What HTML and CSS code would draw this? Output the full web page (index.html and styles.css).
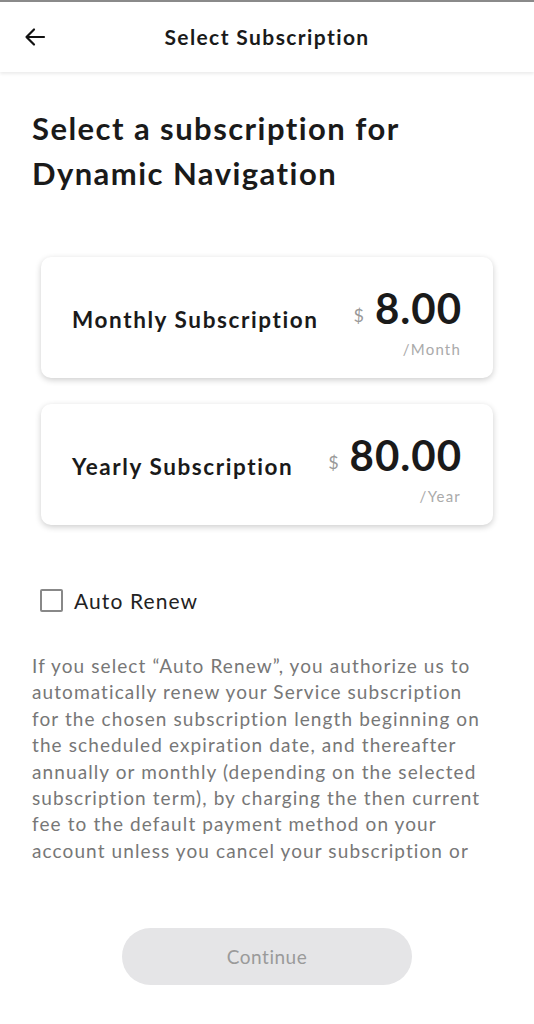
FILE: index.html
```html
<!DOCTYPE html>
<html>

<head>
	<link rel="stylesheet" href="styles.css">
</head>

<body>
	<div class="header">
		<svg class="back" width="24" height="24" viewBox="0 0 24 24">
			<path d="M21 12H3.5M11 4.5L3.5 12L11 19.5" fill="none" stroke="#111" stroke-width="2.2" stroke-linecap="round" stroke-linejoin="round"/>
		</svg>
		<div class="title">Select Subscription</div>
	</div>

	<div class="content">
		<h1>Select a subscription for<br>Dynamic Navigation</h1>

		<div class="plans">
			<div class="card">
				<div class="card-name">Monthly Subscription</div>
				<div class="price">
					<div class="amount"><span class="dollar">$</span>8.00</div>
					<div class="period">/Month</div>
				</div>
			</div>
			<div class="card">
				<div class="card-name">Yearly Subscription</div>
				<div class="price">
					<div class="amount"><span class="dollar">$</span>80.00</div>
					<div class="period">/Year</div>
				</div>
			</div>
		</div>

		<label class="renew">
			<span class="box"></span>
			Auto Renew
		</label>

		<p class="terms">If you select “Auto Renew”, you authorize us to<br>automatically renew your Service subscription<br>for the chosen subscription length beginning on<br>the scheduled expiration date, and thereafter<br>annually or monthly (depending on the selected<br>subscription term), by charging the then current<br>fee to the default payment method on your<br>account unless you cancel your subscription or</p>

		<div class="actions">
			<button class="continue">Continue</button>
		</div>
	</div>
</body>

</html>
```

FILE: styles.css
```css
body {
	margin: 0;
	padding: 0;
	background: #fff;
	font-family: Lato, "Open Sans", sans-serif;
	color: #1a1a1a;
}

.header {
	height: 72px;
	border-top: 2px solid #8a8a8a;
	box-sizing: border-box;
	display: flex;
	align-items: center;
	justify-content: center;
	position: relative;
	box-shadow: 0 2px 3px rgba(0, 0, 0, 0.08);
}

.back {
	position: absolute;
	left: 23px;
	top: 23px;
}

.title {
	font-size: 21px;
	font-weight: 700;
	letter-spacing: 1.4px;
	margin-top: -2px;
}

.content {
	padding: 0 32px;
}

h1 {
	margin: 34px 0 0;
	font-size: 31px;
	line-height: 45px;
	font-weight: 700;
	letter-spacing: 1.45px;
	white-space: nowrap;
}

.plans {
	margin: 61px 9px 0;
	display: flex;
	flex-direction: column;
	gap: 26px;
}

.card {
	height: 121px;
	border-radius: 10px;
	box-shadow: 0 2px 6px rgba(0, 0, 0, 0.2);
	display: flex;
	align-items: center;
	justify-content: space-between;
	padding: 0 32px 0 31px;
}

.card-name {
	font-size: 22.5px;
	font-weight: 700;
	letter-spacing: 1.6px;
	margin-top: 4px;
	white-space: nowrap;
}

.price {
	text-align: right;
	margin-top: 10px;
}

.amount {
	font-size: 42px;
	font-weight: 700;
	line-height: 42px;
	letter-spacing: 1px;
	margin-right: -1px;
}

.dollar {
	font-size: 18px;
	color: #999;
	font-weight: 400;
	margin-right: 10px;
	vertical-align: 2px;
}

.period {
	font-size: 15px;
	color: #aaa;
	margin-top: 4px;
	letter-spacing: 1.2px;
}

.renew {
	display: flex;
	align-items: center;
	gap: 11px;
	margin: 63px 0 0 8px;
	font-size: 21px;
	letter-spacing: 1.1px;
	color: #222;
}

.box {
	width: 19px;
	height: 19px;
	border: 2px solid #888;
	border-radius: 2px;
}

.terms {
	margin: 40px 0 0;
	font-size: 19px;
	line-height: 26.4px;
	color: #777;
	letter-spacing: 1.1px;
	white-space: nowrap;
}

.actions {
	display: flex;
	justify-content: center;
	margin-top: 64px;
}

.continue {
	width: 290px;
	height: 57px;
	border: none;
	border-radius: 29px;
	background: #e5e5e7;
	color: #9a9a9a;
	font-family: inherit;
	font-size: 19px;
	letter-spacing: 0.5px;
}
```
